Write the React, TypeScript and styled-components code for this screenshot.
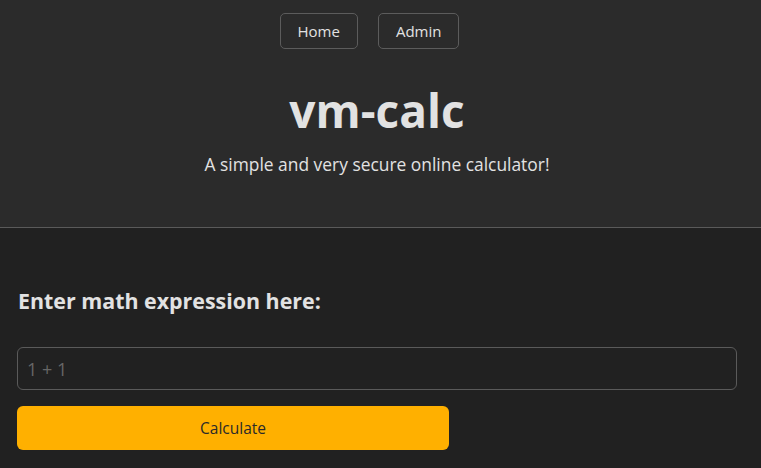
import React from "react";
import styled, { createGlobalStyle } from "styled-components";

const Global = createGlobalStyle`
  html, body { margin: 0; padding: 0; background: #212121; }
  body { font-family: "Open Sans", "Noto Sans", sans-serif; color: #e0e0e0; }
  * { box-sizing: border-box; }
`;

const Header = styled.header`
  background: #2b2b2b;
  border-bottom: 1px solid #5a5a5a;
  height: 228px;
  display: flex;
  flex-direction: column;
  align-items: center;
  padding: 13px 7px 0 0;
`;

const Nav = styled.nav`
  display: flex;
  gap: 20px;
  margin-right: 15px;
`;

const NavButton = styled.a`
  display: flex;
  align-items: center;
  justify-content: center;
  height: 36px;
  padding: 0 17px;
  border: 1px solid #5c5c5c;
  border-radius: 5px;
  color: #e2e2e2;
  font-size: 15px;
  text-decoration: none;
`;

const Title = styled.h1`
  margin: 33px 0 0;
  font-size: 46px;
  line-height: 56px;
  font-weight: 700;
  color: #e2e2e2;
`;

const Subtitle = styled.p`
  margin: 13px 0 0;
  font-size: 17.4px;
  line-height: 26px;
  color: #e2e2e2;
`;

const Main = styled.main`
  padding: 58px 24px 0 17px;
`;

const Heading = styled.h2`
  margin: 0 0 31px;
  font-size: 21.4px;
  line-height: 30px;
  font-weight: 700;
  color: #e2e2e2;
  padding-left: 1px;
`;

const Form = styled.form`
  display: flex;
  flex-direction: column;
  gap: 16px;
`;

const Input = styled.input`
  height: 43px;
  width: 100%;
  background: transparent;
  border: 1px solid #5a5a5a;
  border-radius: 6px;
  padding: 0 9px;
  font-family: inherit;
  font-size: 18px;
  color: #e2e2e2;
  outline: none;
  &::placeholder { color: #666; }
`;

const Submit = styled.button`
  width: 60%;
  height: 44px;
  background: #ffb000;
  border: none;
  border-radius: 6px;
  font-family: inherit;
  font-size: 15.5px;
  color: #2a2a2a;
  cursor: pointer;
`;

export default function App() {
  return (
    <>
      <Global />
      <Header>
        <Nav>
          <NavButton href="#">Home</NavButton>
          <NavButton href="#">Admin</NavButton>
        </Nav>
        <Title>vm-calc</Title>
        <Subtitle>A simple and very secure online calculator!</Subtitle>
      </Header>
      <Main>
        <Heading>Enter math expression here:</Heading>
        <Form onSubmit={(e) => e.preventDefault()}>
          <Input placeholder="1 + 1" />
          <Submit type="submit">Calculate</Submit>
        </Form>
      </Main>
    </>
  );
}
